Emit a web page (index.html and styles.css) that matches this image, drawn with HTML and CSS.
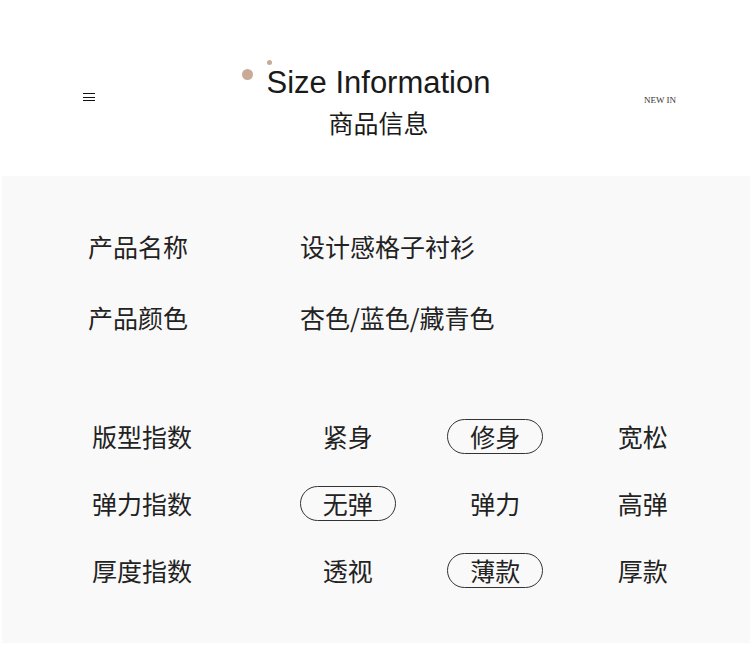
FILE: index.html
```html
<!DOCTYPE html>
<html lang="zh">
<head>
<meta charset="utf-8">
<title>Size Information</title>
<link rel="stylesheet" href="styles.css">
</head>
<body>
<div class="page">
  <header class="header">
    <div class="menu" aria-label="menu">
      <span></span><span></span><span></span>
    </div>
    <div class="title">
      <span class="dot dot-big"></span>
      <span class="dot dot-small"></span>
      <div class="title-en">Size Information</div>
      <div class="title-cn">商品信息</div>
    </div>
    <div class="new-in">NEW IN</div>
  </header>

  <section class="panel">
    <div class="info">
      <div class="info-row">
        <div class="info-label">产品名称</div>
        <div class="info-value">设计感格子衬衫</div>
      </div>
      <div class="info-row">
        <div class="info-label">产品颜色</div>
        <div class="info-value">杏色/蓝色/藏青色</div>
      </div>
    </div>

    <div class="index-table">
      <div class="idx-label">版型指数</div>
      <div class="idx-cell"><span class="opt">紧身</span></div>
      <div class="idx-cell"><span class="opt on">修身</span></div>
      <div class="idx-cell"><span class="opt">宽松</span></div>

      <div class="idx-label">弹力指数</div>
      <div class="idx-cell"><span class="opt on">无弹</span></div>
      <div class="idx-cell"><span class="opt">弹力</span></div>
      <div class="idx-cell"><span class="opt">高弹</span></div>

      <div class="idx-label">厚度指数</div>
      <div class="idx-cell"><span class="opt">透视</span></div>
      <div class="idx-cell"><span class="opt on">薄款</span></div>
      <div class="idx-cell"><span class="opt">厚款</span></div>
    </div>
  </section>
</div>
</body>
</html>
```

FILE: styles.css
```css
* { box-sizing: border-box; }

html, body {
  margin: 0;
  padding: 0;
  background: #ffffff;
}

body {
  font-family: "Noto Sans CJK SC", "Noto Sans", sans-serif;
  color: #222222;
  width: 750px;
  height: 645px;
  overflow: hidden;
}

.page {
  width: 750px;
}

.header {
  height: 176px;
  display: grid;
  grid-template-columns: 1fr auto 1fr;
  align-items: start;
}

.menu {
  justify-self: start;
  margin-left: 83px;
  margin-top: 93px;
  width: 12px;
  display: flex;
  flex-direction: column;
  gap: 2.5px;
}

.menu span {
  display: block;
  height: 1px;
  background: #111111;
}

.title {
  position: relative;
  padding-top: 65px;
  padding-left: 7px;
  display: flex;
  flex-direction: column;
  align-items: center;
}

.title-en {
  font-family: "Liberation Sans", Arial, sans-serif;
  font-size: 31px;
  line-height: 36px;
  color: #1a1a1a;
}

.title-cn {
  margin-top: 6px;
  font-size: 25px;
  line-height: 30px;
  color: #1a1a1a;
}

.dot {
  position: absolute;
  border-radius: 50%;
  background: #c8ab96;
}

.dot-big {
  width: 11px;
  height: 11px;
  left: -18px;
  top: 69px;
}

.dot-small {
  width: 5px;
  height: 5px;
  left: 7px;
  top: 60px;
}

.new-in {
  justify-self: end;
  margin-right: 74px;
  margin-top: 95px;
  font-family: "Liberation Serif", "Times New Roman", serif;
  font-size: 9px;
  line-height: 10px;
  color: #333333;
}

.panel {
  margin-left: 2px;
  height: 467px;
  background: #f9f9f9;
  padding-top: 34.5px;
}

.info {
  padding-left: 86px;
}

.info-row {
  height: 71px;
  display: flex;
  align-items: center;
}

.info-label {
  width: 212px;
  font-size: 25px;
  line-height: 30px;
}

.info-value {
  font-size: 25px;
  line-height: 30px;
}

.index-table {
  margin-top: 50px;
  padding-left: 90px;
  display: grid;
  grid-template-columns: 182px repeat(3, 147.5px);
  grid-auto-rows: 67px;
  align-items: center;
}

.idx-label {
  font-size: 25px;
  line-height: 30px;
}

.idx-cell {
  display: flex;
  justify-content: center;
}

.opt {
  display: flex;
  align-items: center;
  justify-content: center;
  width: 96px;
  height: 35px;
  font-size: 25px;
  line-height: 30px;
  border: 1px solid transparent;
  border-radius: 18px;
}

.opt.on {
  border-color: #333333;
}
```
